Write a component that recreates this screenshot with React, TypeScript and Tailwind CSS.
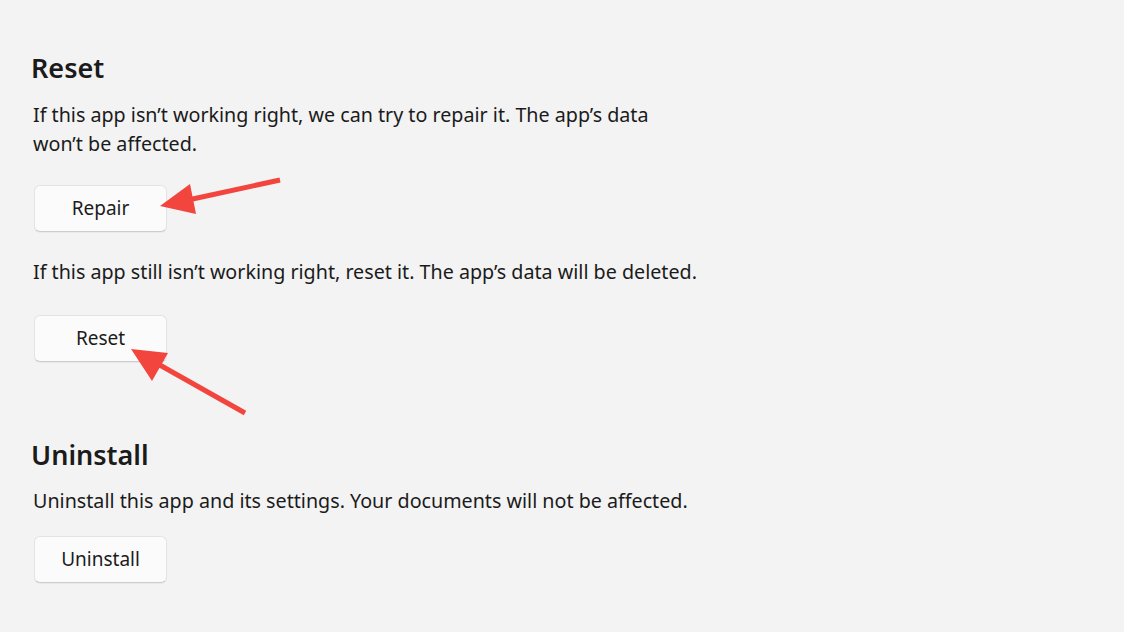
import React from "react";

const font = { fontFamily: '"Noto Sans", "Open Sans", sans-serif' };

const Button = ({ label }: { label: string }) => (
  <button className="w-[133px] h-[47px] rounded-[6px] bg-[#fbfbfb] border border-[#e3e3e3] border-b-[#cccccc] text-[19px] text-[#1b1b1b] shadow-[0_1px_0_rgba(0,0,0,0.04)]">
    {label}
  </button>
);

const Arrows = () => (
  <svg
    className="absolute inset-0 pointer-events-none"
    width="1124"
    height="632"
    viewBox="0 0 1124 632"
  >
    <line x1="280" y1="180" x2="188" y2="200" stroke="#f2453d" strokeWidth="5" />
    <polygon points="160,206 190,184 196,214" fill="#f2453d" />
    <line x1="245" y1="413" x2="158" y2="364" stroke="#f2453d" strokeWidth="5" />
    <polygon points="131,349 168,353 152,381" fill="#f2453d" />
  </svg>
);

export default function App() {
  return (
    <div
      className="relative w-[1124px] h-[632px] bg-[#f3f3f3] overflow-hidden text-[#1b1b1b]"
      style={font}
    >
      <div className="flex flex-col items-start pl-[31px] pt-[50px]">
        <h2 className="text-[27px] font-semibold leading-[36px]">Reset</h2>
        <p className="mt-[14px] pl-[2px] text-[19.7px] leading-[29px]">
          If this app isn’t working right, we can try to repair it. The app’s data
          <br />
          won’t be affected.
        </p>
        <div className="mt-[27px] pl-[3px]">
          <Button label="Repair" />
        </div>
        <p className="mt-[25px] pl-[2px] text-[19.7px] leading-[29px]">
          If this app still isn’t working right, reset it. The app’s data will be deleted.
        </p>
        <div className="mt-[29px] pl-[3px]">
          <Button label="Reset" />
        </div>
        <h2 className="mt-[75px] text-[27px] font-semibold leading-[36px]">Uninstall</h2>
        <p className="mt-[13px] pl-[2px] text-[19.7px] leading-[29px]">
          Uninstall this app and its settings. Your documents will not be affected.
        </p>
        <div className="mt-[21px] pl-[3px]">
          <Button label="Uninstall" />
        </div>
      </div>
      <Arrows />
    </div>
  );
}
